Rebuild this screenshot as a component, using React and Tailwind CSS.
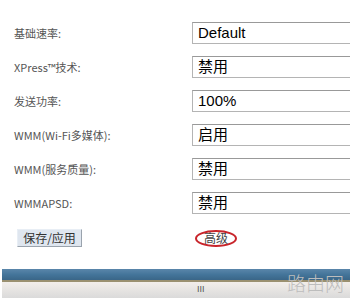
import React from 'react';

const rows = [
  { label: '基础速率:', value: 'Default' },
  { label: 'XPress™技术:', value: '禁用' },
  { label: '发送功率:', value: '100%' },
  { label: 'WMM(Wi-Fi多媒体):', value: '启用' },
  { label: 'WMM(服务质量):', value: '禁用' },
  { label: 'WMMAPSD:', value: '禁用' },
];

const cjk = "font-['Noto_Sans_CJK_SC','Liberation_Sans',sans-serif]";

export default function App() {
  return (
    <div className="relative w-[350px] h-[298px] overflow-hidden bg-white">
      <div className="flex flex-col gap-[12px] pt-[22px]">
        {rows.map((r) => (
          <div key={r.label} className="flex items-center h-[22px]">
            <div className={`shrink-0 w-[192px] pl-[14px] text-[11px] text-[#555] ${cjk}`}>
              {r.label}
            </div>
            <div className="shrink-0 w-[170px] h-[22px] flex items-center pl-[5px] border border-[#b4b4b4] border-t-[#999] bg-white text-[15px] text-black font-['Liberation_Sans','Noto_Sans_CJK_SC',sans-serif]">
              {r.value}
            </div>
          </div>
        ))}
      </div>

      {/* buttons */}
      <div className="flex items-center mt-[15px] h-[18px]">
        <div className="shrink-0 ml-[17px] w-[65px] h-[18px] flex items-center justify-center bg-[#dfe6ef] border border-[#9aa3ad] border-t-[#e8eef5] border-l-[#e8eef5] text-[12px] text-[#333] font-['Noto_Sans_CJK_SC',sans-serif]">
          保存/应用
        </div>
        <div className="shrink-0 ml-[113px] w-[42px] h-[17px] flex items-center justify-center rounded-[50%] border-2 border-[#c8252b] text-[12px] text-[#444] font-['Noto_Sans_CJK_SC',sans-serif]">
          高级
        </div>
      </div>

      {/* bottom bar */}
      <div className="mt-[22px] ml-[2px]">
        <div className="h-[11px] bg-gradient-to-b from-[#5a86aa] via-[#44759a] to-[#3a6688]" />
        <div className="h-[2px] bg-[#9a9070]" />
        <div className="h-[16px] bg-gradient-to-b from-[#f2eeea] to-[#dadada] flex items-center">
          <span className="ml-[195px] text-[9px] text-[#555] tracking-[0px] font-['Liberation_Sans',sans-serif]">III</span>
        </div>
      </div>

      <div className="absolute left-[287px] top-[273px] text-[19px] leading-none text-[#bdbdbd] font-['Noto_Sans_CJK_SC',sans-serif] font-light">
        路由网
      </div>
    </div>
  );
}
